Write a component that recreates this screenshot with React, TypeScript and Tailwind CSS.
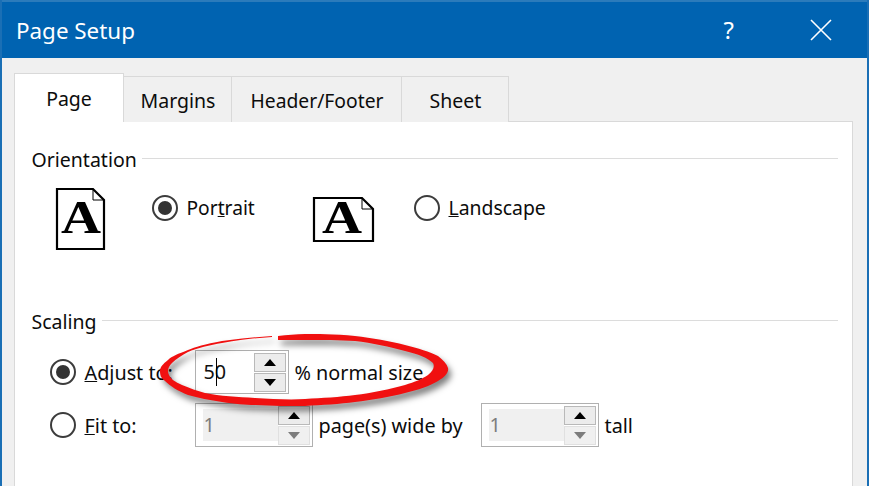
import React from "react";

function Radio({ on }: { on?: boolean }) {
  return (
    <span className="flex h-[26px] w-[26px] shrink-0 items-center justify-center rounded-full border-[2.5px] border-[#3c3c3c] bg-white">
      {on ? <span className="h-[14px] w-[14px] rounded-full bg-[#333333]" /> : null}
    </span>
  );
}

function Arrow({ up, color }: { up?: boolean; color: string }) {
  return (
    <svg width="12" height="7" viewBox="0 0 12 7">
      <polygon points={up ? "6,0 12,7 0,7" : "0,0 12,0 6,7"} fill={color} />
    </svg>
  );
}

function Spin({ value, disabled, w }: { value: string; disabled?: boolean; w: string }) {
  return (
    <div className={`flex h-[44px] items-center border-[1.5px] border-[#b0b0b0] bg-white pl-[7px] pr-[2px] ${w}`}>
      {disabled ? (
        <div className="flex h-[32px] flex-1 items-center bg-[#f0f0f0] pl-[1px] text-[#7d7d7d]">{value}</div>
      ) : (
        <div className="relative flex h-[32px] flex-1 items-center pl-[1px] text-[#111111]">
          {value}
          <span className="absolute left-[13px] top-[2px] h-[28px] w-px bg-black" />
        </div>
      )}
      <div className="flex w-[32px] flex-col gap-px">
        <div className="flex h-[19px] items-center justify-center border-[1.5px] border-[#b9b9b9] bg-[#ececec]">
          <Arrow up color="#000000" />
        </div>
        <div
          className={`flex h-[19px] items-center justify-center border-[1.5px] ${
            disabled ? "border-[#e0e0e0] bg-[#f0f0f0]" : "border-[#b9b9b9] bg-[#ececec]"
          }`}
        >
          <Arrow color={disabled ? "#7d7d7d" : "#000000"} />
        </div>
      </div>
    </div>
  );
}

function Legend({ children }: { children: React.ReactNode }) {
  return (
    <div className="flex h-[28px] items-center gap-[5px] text-[19.5px]">
      <span>{children}</span>
      <span className="mb-[3px] h-[1.5px] flex-1 bg-[#dcdcdc]" />
    </div>
  );
}

function PageIcon({ landscape }: { landscape?: boolean }) {
  const w = landscape ? 61 : 49;
  const h = landscape ? 45 : 62;
  const cx = landscape ? 29 : 25;
  const baseline = landscape ? 36 : 45;
  return (
    <svg width={w} height={h} viewBox={`0 0 ${w} ${h}`} className="overflow-visible">
      <path
        d={`M1 1 H${w - 12} L${w - 1} 12 V${h - 1} H1 Z`}
        fill="#ffffff"
        stroke="#000000"
        strokeWidth="2.2"
      />
      <path d={`M${w - 12} 1 V12 H${w - 1}`} fill="none" stroke="#000000" strokeWidth="1" />
      <text
        transform={`translate(${cx} ${baseline}) scale(1.18 1)`}
        textAnchor="middle"
        fontFamily="'Liberation Serif', serif"
        fontWeight="700"
        fontSize="47"
        fill="#000000"
      >
        A
      </text>
    </svg>
  );
}

function Tab({ label, w }: { label: string; w: string }) {
  return (
    <div className={`flex h-[46px] items-center justify-center border-[1.5px] border-b-0 border-l-0 border-[#d9d9d9] bg-[#f0f0f0] pt-[3px] pl-[1px] ${w}`}>
      {label}
    </div>
  );
}

export default function App() {
  return (
    <div
      className="h-[486px] w-[869px] overflow-hidden bg-[#0063b1] text-[19.8px] leading-[28px] text-[#0c0c0c] border-x-2 border-[#1a6fb5]"
      style={{ fontFamily: "'Noto Sans', 'Open Sans', sans-serif" }}
    >
      <div className="relative h-full">
        <div className="h-[2px] bg-[#2b7bbb] -mx-[2px]" />
        <div className="flex h-[56px] items-center pl-[14px] text-[22.4px] text-white">
          <span className="flex-1 pt-[2px]">Page Setup</span>
          <span className="mr-[76px] text-[24px]">?</span>
          <svg className="mr-[35px]" width="22" height="22" viewBox="0 0 22 22">
            <path d="M1 1 L21 21 M21 1 L1 21" stroke="#ffffff" strokeWidth="1.6" fill="none" />
          </svg>
        </div>
        <div className="h-[428px] bg-[#f0f0f0] pl-[12px] pr-[14px] pt-[15px]">
          <div className="relative z-10 -mb-[1px] flex items-end">
            <div className="flex h-[48.5px] w-[110px] items-center justify-center border-[1.5px] border-b-0 border-[#d9d9d9] bg-white pt-[2px] text-[19.5px]">
              Page
            </div>
            <Tab label="Margins" w="w-[108px] text-[19.5px]" />
            <Tab label="Header/Footer" w="w-[170px] text-[19.3px]" />
            <Tab label="Sheet" w="w-[107px] text-[19.5px]" />
          </div>
          <div className="h-[370px] border-[1.5px] border-[#d9d9d9] bg-white pl-[16.5px] pr-[14.5px] pt-[24.5px]">
            <Legend>Orientation</Legend>
            <div className="flex h-[134px] items-start">
              <div className="ml-[24px] mt-[14px] flex w-[96px] shrink-0">
                <PageIcon />
              </div>
              <div className="mt-[20px] flex w-[161px] shrink-0 items-center gap-[9px] text-[19.2px]">
                <Radio on />
                <span>
                  Por<span className="underline">t</span>rait
                </span>
              </div>
              <div className="mt-[23px] w-[101px] shrink-0">
                <PageIcon landscape />
              </div>
              <div className="mt-[20px] flex items-center gap-[9px] text-[19.4px]">
                <Radio />
                <span>
                  <span className="underline">L</span>andscape
                </span>
              </div>
            </div>
            <Legend>Scaling</Legend>
            <div className="ml-[18px] mt-[14px] flex items-center">
              <div className="flex w-[145px] items-center gap-[9px]">
                <Radio on />
                <span className="pt-[2px]">
                  <span className="underline">A</span>djust to:
                </span>
              </div>
              <Spin value="50" w="w-[94px]" />
              <span className="ml-[6px] pt-[2px]">% normal size</span>
            </div>
            <div className="ml-[18px] mt-[9px] flex items-center">
              <div className="flex w-[145px] items-center gap-[9px]">
                <Radio />
                <span className="pt-[2px]">
                  <span className="underline">F</span>it to:
                </span>
              </div>
              <Spin value="1" disabled w="w-[118px]" />
              <span className="ml-[6px] w-[162px] pt-[2px]">page(s) wide by</span>
              <Spin value="1" disabled w="w-[118px]" />
              <span className="ml-[6px] pt-[2px]">tall</span>
            </div>
          </div>
        </div>
        <svg
          className="absolute left-[-2px] top-0 z-20 drop-shadow-[3px_5px_3px_rgba(0,0,0,0.5)]"
          width="869"
          height="486"
          viewBox="0 0 869 486"
        >
          <path
            d="M272 336 C255 337 238 339 222 341 C205 344 195 347 188 350 C178 354 172 356 168 360 C163 364 160 367 160 371 C160 375 161 378 165 381 C170 386 178 391 188 395 C198 398 210 400 222 402 C235 404 245 405 255 405 C272 406 290 406 305 406 C322 405 340 404 355 402 C372 400 390 397 405 393 C418 390 430 386 438 381 C445 377 449 372 448 368 C447 364 443 360 438 356 C430 352 418 348 405 345 C390 341 372 338 355 336 C335 334 315 334 305 334 C296 334 287 335 278 336 L278 340 C288 340 296 340 305 340 C322 340 340 340 355 341 C372 343 390 347 405 351 C418 354 428 358 433 363 C435 367 433 371 428 375 C422 379 415 382 405 385 C390 389 372 393 355 395 C340 397 322 398 305 399 C290 400 272 399 255 398 C238 397 220 396 205 393 C197 391 190 388 182 385 C175 382 171 379 169 375 C167 371 168 367 172 363 C176 359 182 355 188 352 C197 348 210 345 222 343 C238 340 255 338 272 337 Z"
            fill="#f01010"
          />
        </svg>
      </div>
    </div>
  );
}
